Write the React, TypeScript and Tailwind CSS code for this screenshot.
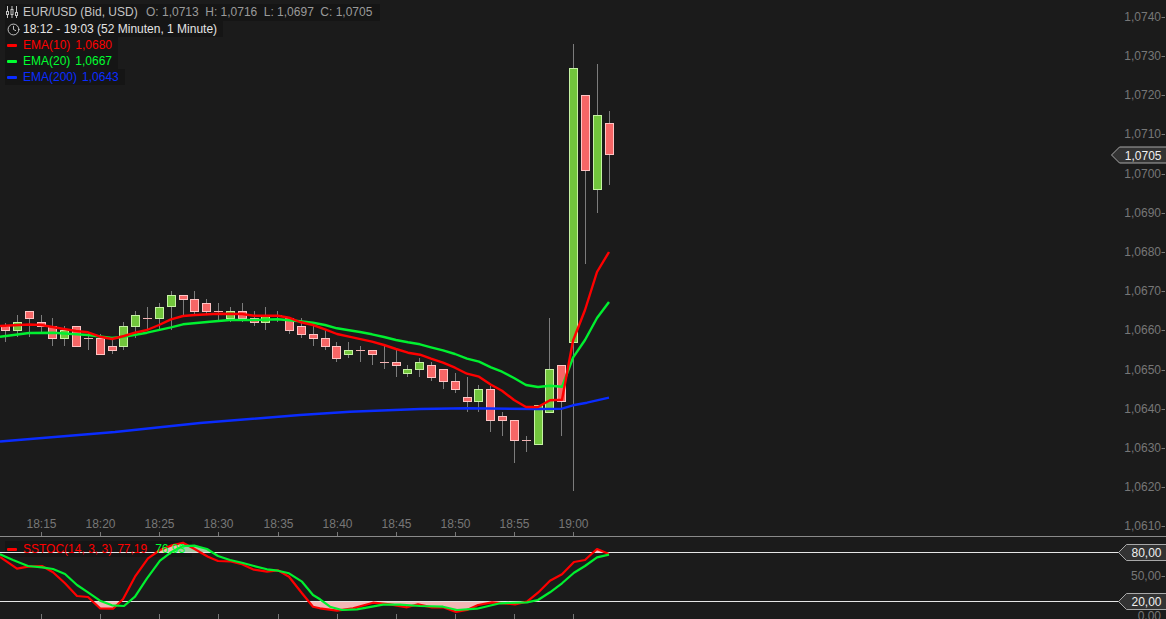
import { Clock } from "lucide-react";

type Candle = ["g" | "r" | "d", number, number, number, number];

// kind, body top, body bottom, wick top, wick bottom
const candles: Candle[] = [
  ["r", 326, 331, 323, 342], ["g", 322, 331, 315, 337], ["r", 311, 319, 311, 337], ["r", 322, 327, 315, 332],
  ["r", 326, 339, 318, 346], ["g", 330, 339, 326, 346], ["r", 326, 347, 326, 347], ["d", 338, 338, 332, 350],
  ["r", 338, 355, 334, 355], ["r", 346, 351, 339, 354], ["g", 326, 347, 322, 350], ["g", 315, 327, 311, 338],
  ["d", 318, 318, 307, 330], ["g", 307, 319, 303, 330], ["g", 295, 307, 291, 330], ["r", 295, 300, 295, 315],
  ["r", 299, 312, 291, 315], ["r", 303, 312, 299, 315], ["d", 311, 311, 303, 322], ["g", 311, 319, 307, 322],
  ["r", 311, 319, 303, 322], ["r", 318, 323, 311, 326], ["g", 315, 323, 307, 330], ["d", 315, 315, 311, 322],
  ["r", 318, 331, 318, 334], ["r", 326, 335, 318, 338], ["r", 334, 339, 326, 346], ["r", 338, 347, 330, 350],
  ["r", 346, 359, 342, 362], ["g", 350, 355, 342, 358], ["d", 350, 350, 346, 362], ["r", 350, 355, 350, 365],
  ["d", 362, 362, 346, 369], ["r", 362, 366, 350, 377], ["g", 369, 374, 365, 377], ["g", 362, 370, 358, 377],
  ["r", 365, 378, 362, 381], ["r", 369, 382, 369, 389], ["r", 381, 390, 373, 393], ["r", 397, 402, 377, 412],
  ["g", 389, 402, 385, 412], ["r", 389, 421, 386, 432], ["r", 416, 421, 412, 436], ["r", 420, 441, 420, 463],
  ["d", 440, 440, 436, 452], ["g", 405, 445, 405, 445], ["g", 369, 413, 318, 413], ["r", 365, 402, 365, 436],
  ["g", 68, 343, 44, 491], ["r", 95, 171, 95, 264], ["g", 115, 190, 64, 213], ["r", 123, 155, 111, 185],
];

const ema10: [number, number][] = [
  [0, 326], [29, 324.5], [41, 325], [64, 329], [76, 331], [88, 332.3], [100, 336.7], [112, 339], [124, 336],
  [135, 332.7], [147, 330], [159, 325], [171, 319.3], [183, 316], [195, 315], [218, 313.7], [242, 314],
  [254, 315.7], [278, 315.7], [289, 317.7], [300, 322], [313, 325], [325, 329.3], [337, 334], [349, 336.7],
  [372, 341.7], [384, 345], [396, 349], [408, 352.7], [420, 354.7], [431, 358.7], [443, 362.7], [455, 367.7],
  [467, 373.7], [479, 376.7], [491, 384.7], [502, 390.7], [514, 400], [526, 407], [538, 407], [550, 400.3],
  [562, 399.7], [573, 340.7], [585, 310], [597, 272], [609, 252],
];

const ema20: [number, number][] = [
  [0, 336.7], [29, 333], [53, 332.7], [88, 335], [112, 338], [124, 336.7], [147, 332.7], [171, 327.3],
  [183, 324.3], [207, 322], [230, 320], [254, 320], [278, 319.3], [300, 321.3], [313, 322.7], [325, 325],
  [337, 328.3], [349, 330.3], [360, 332], [372, 334.3], [384, 337], [396, 340], [408, 342.3], [420, 344.3],
  [431, 347.3], [443, 350.3], [455, 354], [467, 358.7], [479, 361.7], [491, 367.3], [502, 371.7], [514, 378],
  [526, 385], [538, 387], [550, 385.7], [562, 386.7], [573, 357.7], [585, 340], [597, 318], [609, 302],
];

const ema200: [number, number][] = [
  [0, 441.5], [115, 432], [200, 423], [300, 415], [350, 411.7], [420, 409], [467, 408.3], [538, 409],
  [562, 408.7], [573, 405.3], [587, 402.7], [609, 397.7],
];

const stochK: [number, number][] = [
  [0, 557], [17, 568.7], [28, 566.7], [42, 566], [53, 572.3], [65, 583.3], [77, 596], [88, 597], [100, 608.3],
  [113, 608.7], [123, 599.3], [135, 576.7], [148, 558.3], [160, 550], [172, 545.3], [183, 542.7], [195, 549.3],
  [208, 556.7], [218, 561], [230, 561.3], [242, 564.3], [254, 569.7], [267, 571.7], [278, 570.3], [289, 576.7],
  [302, 593.3], [313, 606.7], [320, 608.3], [337, 610.7], [353, 608.3], [373, 602.7], [390, 604.3], [407, 607.3],
  [418, 604.3], [432, 607.3], [443, 607.3], [456, 612], [467, 610], [478, 605], [492, 602.3], [515, 604.3],
  [527, 601.7], [538, 592.7], [550, 580.7], [562, 574.3], [574, 562], [585, 560], [597, 549], [609, 554],
];

const stochD: [number, number][] = [
  [0, 554.3], [13, 560], [28, 566], [42, 567.3], [53, 569], [65, 574], [77, 585], [88, 592.3], [100, 600.7],
  [112, 605.3], [124, 606], [135, 596.7], [147, 578.3], [160, 560.7], [172, 551.7], [183, 546], [195, 545.7],
  [207, 549], [218, 556], [230, 560], [242, 562.7], [254, 566], [267, 569.3], [278, 570.7], [289, 573.3],
  [302, 581.7], [313, 595], [320, 599.3], [330, 606.7], [342, 610], [357, 609.3], [383, 604.7], [400, 604.7],
  [420, 606], [443, 606.7], [457, 610], [477, 608.7], [500, 603.3], [527, 602.3], [538, 600], [550, 592.3],
  [562, 583.3], [574, 572.7], [585, 566], [597, 557.3], [609, 554.7],
];

const times = ["18:15", "18:20", "18:25", "18:30", "18:35", "18:40", "18:45", "18:50", "18:55", "19:00"];
const timeX = [41.5, 100.5, 159.5, 218.5, 278.5, 337.5, 396.5, 455.5, 514.5, 573.5];
const prices = ["1,0740", "1,0730", "1,0720", "1,0710", "1,0700", "1,0690", "1,0680", "1,0670", "1,0660", "1,0650", "1,0640", "1,0630", "1,0620", "1,0610"];

const pts = (line: [number, number][]) => line.map(([x, y]) => `${x},${y}`).join(" ");
const font = "Liberation Sans, Arial, sans-serif";

function Tag({ y, left, label }: { y: number; left: number; label: string }) {
  return (
    <g>
      <polygon
        points={`${left},${y} ${left + 8},${y - 8} 1167,${y - 8} 1167,${y + 8} ${left + 8},${y + 8}`}
        fill="#333333"
        stroke="#a8a8a8"
      />
      <text x={1161.5} y={y + 4.5} textAnchor="end" fontSize={12} fill="#f0f0f0" fontFamily={font}>
        {label}
      </text>
    </g>
  );
}

function Sliders() {
  return (
    <svg width="12" height="12" viewBox="0 0 12 12" fill="none" stroke="#c4c4c4" strokeWidth="1">
      <path d="M1.5 0v12M6 0v12M10.5 0v12" />
      <rect x="0.5" y="5.5" width="2" height="3" fill="#1b1b1b" />
      <rect x="5" y="3.5" width="2" height="5" fill="#1b1b1b" />
      <rect x="9.5" y="6.5" width="2" height="3" fill="#1b1b1b" />
    </svg>
  );
}

function Dash({ className }: { className: string }) {
  return (
    <span className="flex w-[18px] shrink-0 items-center">
      <span className={`ml-[2px] h-[3px] w-[10px] rounded-[1px] ${className}`} />
    </span>
  );
}

function PriceChart() {
  return (
    <svg className="absolute inset-0" width="1166" height="536" viewBox="0 0 1166 536">
      {candles.map(([kind, top, bottom, wickTop, wickBottom], i) => {
        const x = Math.round(5 + i * 11.835) + 0.5;
        if (kind === "d") {
          return (
            <g key={i}>
              <line x1={x} x2={x} y1={wickTop} y2={wickBottom} stroke="#7c7c7c" />
              <line x1={x - 4.5} x2={x + 4.5} y1={top + 0.5} y2={top + 0.5} stroke="#f5b4b4" />
            </g>
          );
        }
        return (
          <g key={i}>
            <line x1={x} x2={x} y1={wickTop} y2={wickBottom} stroke="#7c7c7c" />
            <rect
              x={x - 4}
              y={top + 0.5}
              width={8}
              height={bottom - top - 1}
              fill={kind === "g" ? "#72c63c" : "#f66666"}
              stroke={kind === "g" ? "#c6f2a4" : "#ffc4c4"}
            />
          </g>
        );
      })}
      <polyline points={pts(ema200)} fill="none" stroke="#0a2cff" strokeWidth="2.4" strokeLinejoin="round" />
      <polyline points={pts(ema20)} fill="none" stroke="#00f030" strokeWidth="2.4" strokeLinejoin="round" />
      <polyline points={pts(ema10)} fill="none" stroke="#ff0000" strokeWidth="2.4" strokeLinejoin="round" />
      {prices.map((p, i) => {
        const y = 16.7 + i * 39.2;
        return (
          <g key={p}>
            <text x={1161} y={y + 4} textAnchor="end" fontSize={12} fill="#777777" fontFamily={font}>
              {p}
            </text>
            <line x1={1161.5} x2={1165} y1={Math.round(y) + 0.5} y2={Math.round(y) + 0.5} stroke="#777777" />
          </g>
        );
      })}
      {times.map((t, i) => (
        <g key={t}>
          <text x={timeX[i]} y={528} textAnchor="middle" fontSize={12} fill="#777777" fontFamily={font}>
            {t}
          </text>
          <line x1={timeX[i]} x2={timeX[i]} y1={532} y2={536} stroke="#777777" />
        </g>
      ))}
      <Tag y={155} left={1111.5} label="1,0705" />
    </svg>
  );
}

function StochChart() {
  return (
    <svg className="absolute inset-0" width="1166" height="82" viewBox="0 537 1166 82">
      <defs>
        <clipPath id="over">
          <rect x="0" y="537" width="1166" height="15.5" />
        </clipPath>
        <clipPath id="under">
          <rect x="0" y="601.5" width="1166" height="18" />
        </clipPath>
      </defs>
      <rect x="5" y="541" width="187" height="16" fill="#151515" />
      <polygon points={`0,552.5 ${pts(stochK)} 609,552.5`} fill="#f2b6b6" clipPath="url(#over)" />
      <polygon points={`0,552.5 ${pts(stochD)} 609,552.5`} fill="#a0c8a0" clipPath="url(#over)" />
      <polygon points={`0,601.5 ${pts(stochK)} 609,601.5`} fill="#f2b6b6" clipPath="url(#under)" />
      <line x1={0} x2={1119} y1={552.5} y2={552.5} stroke="#e6e6e6" />
      <line x1={0} x2={1119} y1={601.5} y2={601.5} stroke="#e6e6e6" />
      <polyline points={pts(stochK)} fill="none" stroke="#ff0000" strokeWidth="2.2" strokeLinejoin="round" />
      <polyline points={pts(stochD)} fill="none" stroke="#00f030" strokeWidth="2.2" strokeLinejoin="round" />
      {timeX.map((x) => (
        <line key={x} x1={x} x2={x} y1={614} y2={619} stroke="#777777" />
      ))}
      <text x={1161} y={580} textAnchor="end" fontSize={12} fill="#777777" fontFamily={font}>
        50,00
      </text>
      <line x1={1161.5} x2={1165} y1={576.5} y2={576.5} stroke="#777777" />
      <text x={1161} y={620} textAnchor="end" fontSize={12} fill="#777777" fontFamily={font}>
        0,00
      </text>
      <Tag y={552.5} left={1118.5} label="80,00" />
      <Tag y={601.5} left={1118.5} label="20,00" />
    </svg>
  );
}

export default function App() {
  return (
    <div className="flex h-[619px] w-full flex-col overflow-hidden bg-[#1b1b1b] font-['Liberation_Sans',Arial,sans-serif] text-xs">
      <div className="relative h-[536px] shrink-0">
        <PriceChart />
        <div className="absolute left-[5px] top-[4px] flex flex-col items-start leading-4">
          <div className="flex h-[17px] w-[375px] items-center bg-[#151515] pb-px text-[#c4c4c4]">
            <span className="flex w-[18px] shrink-0 items-center pl-[1px]">
              <Sliders />
            </span>
            <span className="w-[123px] shrink-0">EUR/USD (Bid, USD)</span>
            <span className="flex gap-[6.5px] text-[#9a9a9a]">
              <span>O: 1,0713</span>
              <span>H: 1,0716</span>
              <span>L: 1,0697</span>
              <span>C: 1,0705</span>
            </span>
          </div>
          <div className="flex h-4 items-center bg-[#151515] pr-[6px] text-[#e4e4e4]">
            <span className="flex w-[18px] shrink-0 items-center pl-[1.5px]">
              <Clock size={13} strokeWidth={1.5} />
            </span>
            <span>18:12 - 19:03 (52 Minuten, 1 Minute)</span>
          </div>
          <div className="flex h-4 items-center bg-[#151515] pr-[6px] text-[#ff0000]">
            <Dash className="bg-[#ff0000]" />
            <span className="mr-[5px]">EMA(10)</span>
            <span>1,0680</span>
          </div>
          <div className="flex h-4 items-center bg-[#151515] pr-[6px] text-[#00ff30]">
            <Dash className="bg-[#00ff30]" />
            <span className="mr-[5px]">EMA(20)</span>
            <span>1,0667</span>
          </div>
          <div className="flex h-4 items-center bg-[#151515] pr-[6px] text-[#0a2cff]">
            <Dash className="bg-[#0a2cff]" />
            <span className="mr-[5px]">EMA(200)</span>
            <span>1,0643</span>
          </div>
        </div>
      </div>
      <div className="relative flex-1 border-t border-[#8a8a8a]">
        <StochChart />
        <div className="absolute left-[5px] top-[4px] flex h-4 items-center text-[#ff0000]">
          <Dash className="bg-[#ff0000]" />
          <span className="mr-[5px]">SSTOC(14, 3, 3)</span>
          <span className="mr-[8px]">77,19</span>
          <span className="text-[#00ff30]">76,93</span>
        </div>
      </div>
    </div>
  );
}
